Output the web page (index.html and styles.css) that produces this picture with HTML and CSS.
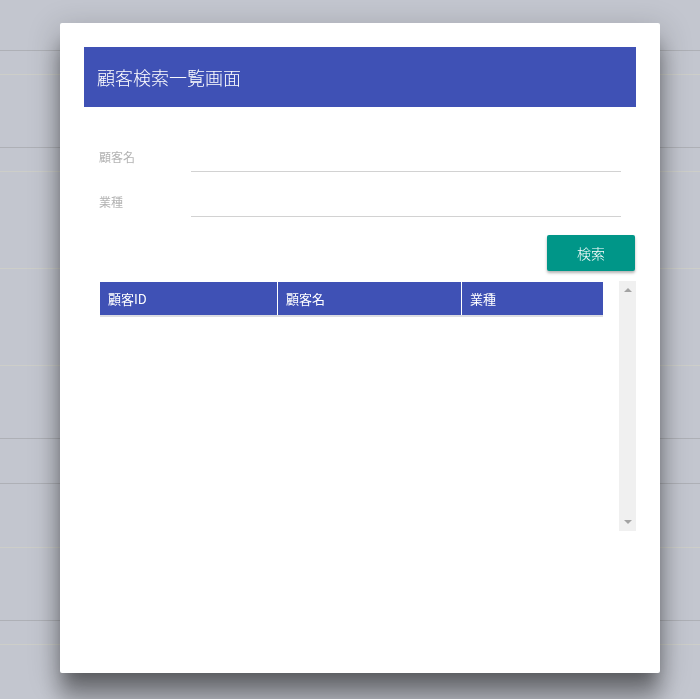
FILE: index.html
```html
<!DOCTYPE html>
<html lang="ja">
<head>
<meta charset="utf-8">
<title>顧客検索一覧画面</title>
<link rel="stylesheet" href="styles.css">
</head>
<body>
<div class="page">
  <div class="bg-row h50 dark"></div>
  <div class="bg-row h23 light"></div>
  <div class="bg-row h72 dark"></div>
  <div class="bg-row h23 light"></div>
  <div class="bg-row h96 light"></div>
  <div class="bg-row h96 light"></div>
  <div class="bg-row h72 dark"></div>
  <div class="bg-row h44 dark"></div>
  <div class="bg-row h63 light"></div>
  <div class="bg-row h72 dark"></div>
  <div class="bg-row h23 light"></div>
</div>

<div class="modal">
  <div class="modal-header">顧客検索一覧画面</div>
  <form class="search-form">
    <div class="field">
      <label class="field-label">顧客名</label>
      <div class="field-input"></div>
    </div>
    <div class="field">
      <label class="field-label">業種</label>
      <div class="field-input"></div>
    </div>
    <div class="actions">
      <button type="button" class="btn-search">検索</button>
    </div>
  </form>
  <div class="result">
    <div class="table-wrap">
      <div class="thead">
        <div class="th col-id">顧客ID</div>
        <div class="th col-name">顧客名</div>
        <div class="th col-type">業種</div>
      </div>
    </div>
    <div class="scrollbar">
      <span class="arrow-up"></span>
      <span class="arrow-down"></span>
    </div>
  </div>
</div>
</body>
</html>
```
FILE: styles.css
```css
html, body {
  margin: 0;
  padding: 0;
  height: 100%;
}
body {
  background: #c3c6cf;
  font-family: "Noto Sans CJK JP", "Noto Sans", sans-serif;
  overflow: hidden;
}
.page {
  display: flex;
  flex-direction: column;
}
.bg-row { flex: none; }
.h50 { height: 50px; }
.h23 { height: 23px; }
.h72 { height: 72px; }
.h96 { height: 96px; }
.h44 { height: 44px; }
.h63 { height: 63px; }
.dark { border-bottom: 1px solid #aeb0b6; }
.light { border-bottom: 1px solid #cdcec9; }

.modal {
  position: fixed;
  left: 60px;
  top: 23px;
  width: 600px;
  height: 650px;
  box-sizing: border-box;
  background: #fff;
  border-radius: 2px;
  padding: 24px;
  box-shadow: 0 26px 22px 0 rgba(0,0,0,.32), 0 8px 30px 4px rgba(0,0,0,.18), 0 11px 15px -7px rgba(0,0,0,.25);
}
.modal-header {
  height: 60px;
  background: #3f51b5;
  color: #fff;
  font-size: 18px;
  font-weight: 300;
  display: flex;
  align-items: center;
  padding-left: 13px;
}
.search-form {
  margin: 36px 0 0;
  padding: 0 0 0 15px;
}
.field {
  display: flex;
  align-items: center;
  margin-bottom: 16px;
  padding-right: 15px;
}
.field-label {
  width: 92px;
  flex: none;
  font-size: 12px;
  color: #b3b3b3;
  margin-top: -2px;
}
.field-input {
  flex: 1;
  height: 28px;
  border-bottom: 1px solid #d2d2d2;
}
.actions {
  display: flex;
  justify-content: flex-end;
  margin-top: 18px;
  padding-right: 1px;
}
.btn-search {
  width: 88px;
  height: 36px;
  border: none;
  border-radius: 2px;
  background: #009688;
  color: #fff;
  font-family: inherit;
  font-size: 14px;
  font-weight: 300;
  box-shadow: 0 2px 3px rgba(0,0,0,.3);
  padding: 0;
}
.result {
  display: flex;
  margin-top: 10px;
  padding-left: 16px;
  height: 250px;
}
.table-wrap {
  flex: 1;
  margin-right: 16px;
  padding-top: 1px;
}
.thead {
  display: flex;
  height: 33px;
  background: #3f51b5;
  border-bottom: 2px solid #dcdde2;
}
.th {
  color: #fff;
  font-size: 13px;
  display: flex;
  align-items: center;
  padding-left: 8px;
  box-sizing: border-box;
}
.col-id { width: 178px; border-right: 1px solid #fff; }
.col-name { width: 184px; border-right: 1px solid #fff; }
.col-type { flex: 1; }
.scrollbar {
  width: 17px;
  flex: none;
  background: #f0f0f0;
  display: flex;
  flex-direction: column;
  align-items: center;
  justify-content: space-between;
  padding: 7px 0 7px;
  box-sizing: border-box;
}
.arrow-up {
  width: 0;
  height: 0;
  border-left: 4px solid transparent;
  border-right: 4px solid transparent;
  border-bottom: 4px solid #a3a3a3;
}
.arrow-down {
  width: 0;
  height: 0;
  border-left: 4px solid transparent;
  border-right: 4px solid transparent;
  border-top: 4px solid #a3a3a3;
}
```
